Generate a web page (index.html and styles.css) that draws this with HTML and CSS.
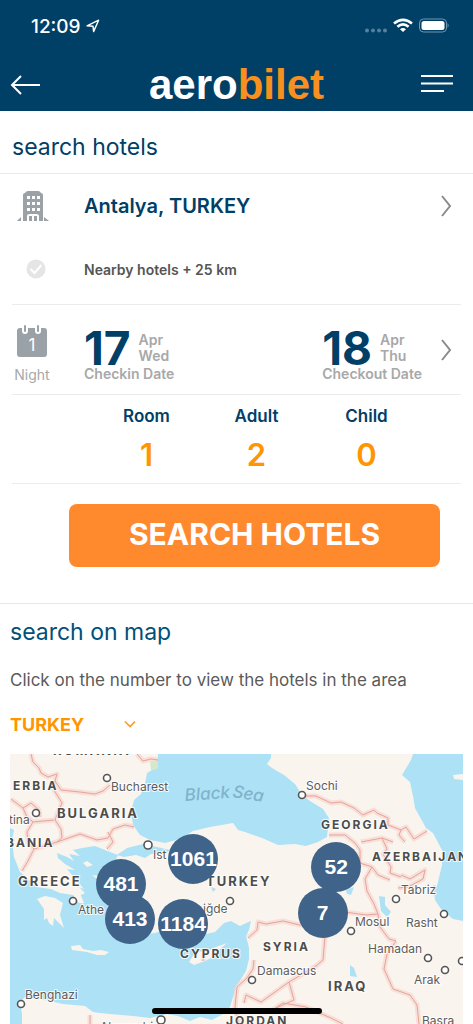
FILE: index.html
```html
<!DOCTYPE html>
<html lang="en">
<head>
    <meta charset="UTF-8">
    <meta name="viewport" content="width=device-width, initial-scale=1.0">
    <title>aerobilet</title>
    <link rel="stylesheet" href="styles.css">
</head>
<body>
    <header class="header">
        <div class="status-bar">
            <span class="clock">12:09</span>
            <svg class="location" width="14" height="14" viewBox="0 0 14 14"><path d="M1 6.8 L12.6 1.2 L7.6 12.6 L7 7.2 Z"/></svg>
            <svg class="signal" width="86" height="18" viewBox="0 0 86 18">
                <g class="dots"><circle cx="4" cy="13.5" r="2"/><circle cx="10" cy="13.5" r="2"/><circle cx="16" cy="13.5" r="2"/><circle cx="22" cy="13.5" r="2"/></g>
                <g class="wifi"><path d="M31 6.6 Q40 -1 49 6.6"/><path d="M34.4 9.8 Q40 5 45.6 9.8"/></g>
                <path class="solid" d="M37 12.2 Q40 10 43 12.2 L40 15 Z"/>
                <rect class="battery" x="56.5" y="2" width="27" height="13" rx="4"/>
                <rect class="solid" x="58.5" y="4" width="23" height="9" rx="2.5"/>
                <path class="cap" d="M84.5 6 Q87 8.5 84.5 11 Z"/>
            </svg>
        </div>
        <div class="nav-bar">
            <button class="icon-button" aria-label="Back">
                <svg width="32" height="22" viewBox="0 0 32 22"><path d="M31 11 H3 M12 2 L3 11 L12 20"/></svg>
            </button>
            <a class="logo" href="#">aero<span>bilet</span></a>
            <button class="icon-button" aria-label="Menu">
                <svg width="32" height="22" viewBox="0 0 32 22"><path d="M0 2 H32 M0 9.5 H32 M0 17 H23"/></svg>
            </button>
        </div>
    </header>

    <main>
        <form class="search">
            <h1 class="title">search hotels</h1>
            <button type="button" class="row destination">
                <svg class="hotel" width="32" height="32" viewBox="0 0 32 32">
                    <path fill-rule="evenodd" d="M6 29 V5 Q6 3 8 3 Q9 1 11 1 H21 Q23 1 24 3 Q26 3 26 5 V31 H22 V26 Q22 24 19 24 H13 Q10 24 10 26 V31 H0 L4 27 V31 H6 Z M10 6 H13 V9 H10 Z M15 6 H18 V9 H15 Z M20 6 H23 V9 H20 Z M10 12 H13 V15 H10 Z M15 12 H18 V15 H15 Z M20 12 H23 V15 H20 Z M10 18 H13 V21 H10 Z M15 18 H18 V21 H15 Z M20 18 H23 V21 H20 Z M12 26 H15 V31 H12 Z M17 26 H20 V31 H17 Z M27 31 V27 L32 31 Z"/>
                </svg>
                <span class="place">Antalya, TURKEY</span>
                <svg class="chevron" width="12" height="24" viewBox="0 0 12 24"><path d="M2 2 L10 12 L2 22"/></svg>
            </button>
            <label class="row nearby">
                <input type="checkbox" class="nearby-check">
                <svg class="tick" width="20" height="20" viewBox="0 0 20 20"><circle cx="10" cy="10" r="9.5"/><path d="M4.5 10 L8.5 14 L15.5 6"/></svg>
                <span>Nearby hotels + 25 km</span>
            </label>

            <button type="button" class="row dates">
                <span class="night">
                    <svg width="32" height="34" viewBox="0 0 32 34">
                        <rect class="sheet" x="1" y="3" width="30" height="29" rx="3"/>
                        <path class="ring-gap" d="M9 1 V6 M22 1 V6"/>
                        <path class="ring" d="M9 1 V6 M22 1 V6"/>
                        <text x="16" y="26">1</text>
                    </svg>
                    <span>Night</span>
                </span>
                <span class="date">
                    <strong>17</strong>
                    <span class="month">Apr<br>Wed</span>
                    <span class="caption">Checkin Date</span>
                </span>
                <span class="date">
                    <strong>18</strong>
                    <span class="month">Apr<br>Thu</span>
                    <span class="caption">Checkout Date</span>
                </span>
                <svg class="chevron" width="12" height="24" viewBox="0 0 12 24"><path d="M2 2 L10 12 L2 22"/></svg>
            </button>

            <div class="guests">
                <button type="button" class="guest">Room <span>1</span></button>
                <button type="button" class="guest">Adult <span>2</span></button>
                <button type="button" class="guest">Child <span>0</span></button>
            </div>
            <button type="submit" class="submit">SEARCH HOTELS</button>
        </form>

        <section class="map-search">
            <h2 class="title">search on map</h2>
            <p class="hint">Click on the number to view the hotels in the area</p>
            <div class="country">
                <select aria-label="Country"><option>TURKEY</option></select>
                <svg width="12" height="8" viewBox="0 0 12 8"><path d="M1 1.5 L6 6.5 L11 1.5"/></svg>
            </div>
            <div class="map">
                <svg class="map-art" viewBox="10 754 453 270">
                    <defs>
                        <path id="borders" d="M31 754 L33 762 L39 768 L41 773 L48 777 L57 774 L55 781 L61 790 L80 792 L95 794 L103 791 L110 785 M55 781 L54 790 L62 803 L58 812 L55 820 L61 829 L62 838 L57 842 L44 846 L34 849 L28 861 L22 871 M11 799 L23 808 L27 817 L33 822 L54 820 M23 808 L31 803 L39 810 L40 817 M33 822 L27 832 L28 842 L34 849 M57 842 L80 834 L97 840 L108 838 L113 829 L125 825 L134 827 M108 832 L113 842 L107 849 M137 754 L143 761 L151 759 L158 760
                        M304 796 L316 796 L331 803 L341 802 L354 808 L363 815 L374 810 L377 813 L388 818 L388 825 L401 830 L399 835 L405 842 M401 830 L406 827 L414 839 L427 831 M329 835 L345 835 L355 843 L360 850 L360 863 L372 867 L378 875 L390 880 M361 842 L382 838 L393 842 M382 838 L387 849 L383 854 L391 867 L390 873 L401 877 M372 867 L365 879 L367 891 L374 904 L378 914 L380 927 L389 939 L396 941 M401 875 L410 879 L425 870 L423 879 L408 887 L398 888
                        M248 938 L257 930 L258 922 L266 924 L283 921 L300 925 L322 922 L345 912 L366 915 L378 914 M325 936 L323 960 L316 966 L289 982 L261 1002 L246 995 L244 1003 M254 960 L253 969 L247 978 L237 987 M289 982 L294 1000 L274 1009 L283 1003 L306 1007 L331 1018 L343 1024 M396 941 L387 954 L384 969 L393 989 L410 995 L417 1005 L419 1024 M237 987 L235 1007 L239 1024 M90 1015 L90 1024 M204 954 L203 961"/>
                    </defs>
                    <rect class="land" x="10" y="754" width="453" height="270"/>
                    <path class="water" d="M158 754 L158 768 L152 770 L147 773 L145 784 L141 794 L134 800 L131 812 L133 825 L140 835 L150 840 L165 843 L180 839 L193 831 L210 827 L233 823 L238 830 L245 832 L262 838 L278 845 L295 844 L306 846 L318 842 L327 837 L329 818 L323 809 L310 801 L302 795 L295 784 L284 775 L272 768 L267 764 L271 758 L271 754 L218 754 L217 757 L209 755 L203 757 L204 760 L211 763 L214 776 L222 777 L228 770 L235 766 L247 770 L251 765 L246 760 L237 758 L226 762 L217 757 L218 754 Z"/>
                    <path class="water" d="M117 855 L127 848 L143 844 L157 847 L170 850 L165 854 L151 854 L145 858 L136 855 L124 857 Z"/>
                    <path class="water" d="M413 754 L411 760 L402 775 L410 782 L413 796 L415 808 L426 828 L433 833 L443 852 L442 865 L437 886 L433 885 L435 900 L441 909 L453 919 L463 921 L463 780 L454 779 L453 775 L463 774 L463 754 Z"/>
                    <path class="water" d="M10 828 L14 830 L12 840 L14 857 L20 872 L28 879 L36 887 L51 889 L60 893 L73 895 L79 903 L84 903 L80 893 L73 885 L84 889 L76 880 L67 869 L75 870 L65 864 L58 858 L57 853 L67 857 L74 861 L69 854 L80 856 L73 850 L82 848 L95 846 L110 852 L118 855 L114 863 L120 873 L112 880 L112 900 L120 925 L140 935 L155 933 L165 930 L180 939 L206 934 L215 932 L224 923 L231 921 L240 926 L244 924 L251 921 L249 930 L246 936 L249 948 L249 959 L246 971 L236 987 L230 1007 L223 1014 L212 1020 L200 1017 L190 1021 L178 1016 L167 1014 L150 1018 L133 1016 L110 1014 L100 1013 L93 1012 L85 1006 L63 1004 L40 999 L25 997 L20 1002 L22 1014 L22 1024 L10 1024 Z"/>
                    <path class="land" d="M37 899 L45 896 L55 898 L63 903 L61 911 L60 915 L64 928 L59 923 L54 918 L53 926 L49 923 L47 918 L44 920 L44 909 Z M71 946 L80 945 L83 949 L93 951 L101 950 L109 952 L105 955 L97 955 L87 952 L72 950 Z M189 962 L196 951 L205 952 L216 947 L227 943 L219 950 L217 955 L205 961 L194 965 Z M83 863 L87 861 L93 865 L87 867 Z M103 883 L111 882 L109 888 L102 886 Z M92 875 L99 876 L97 879 Z M70 880 L79 887 L85 893 L81 895 L72 887 Z M128 927 L133 930 L126 935 Z"/>
                    <path class="water" d="M379 896 L385 897 L385 905 L391 912 L387 917 L381 911 Z M346 890 L354 887 L351 895 L347 894 Z M350 965 L354 968 L357 977 L350 976 Z M211 887 L216 889 L213 892 Z"/>
                    <path class="green" d="M150 762 L158 759 L158 769 L151 770 Z"/>
                    <use href="#borders" class="border-glow"/>
                    <use href="#borders" class="border-line"/>

                    <g class="sea-name"><text transform="translate(185 801) rotate(-4)">Black</text><text transform="translate(232 797) rotate(9)">Sea</text></g>
                    <g class="countries">
                        <text class="large" x="53" y="755">ROMANIA</text>
                        <text x="13" y="790">ERBIA</text>
                        <text class="large" x="57" y="818">BULGARIA</text>
                        <text x="6" y="847">BANIA</text>
                        <text class="large" x="18" y="886">GREECE</text>
                        <text class="large" x="206" y="886">TURKEY</text>
                        <text x="321" y="829">GEORGIA</text>
                        <text x="372" y="861">AZERBAIJAN</text>
                        <text x="180" y="958">CYPRUS</text>
                        <text x="263" y="951">SYRIA</text>
                        <text class="large" x="328" y="991">IRAQ</text>
                        <text x="226" y="1025">JORDAN</text>
                    </g>
                    <g class="cities">
                        <text x="111" y="791">Bucharest</text>
                        <text x="9" y="824">tina</text>
                        <text x="153" y="859">Ist</text>
                        <text x="306" y="790">Sochi</text>
                        <text x="78" y="914">Athe</text>
                        <text x="203" y="913">iğde</text>
                        <text x="25" y="999">Benghazi</text>
                        <text x="257" y="975">Damascus</text>
                        <text x="355" y="926">Mosul</text>
                        <text x="401" y="894">Tabriz</text>
                        <text x="406" y="927">Rasht</text>
                        <text x="368" y="953">Hamadan</text>
                        <text x="414" y="984">Arak</text>
                        <text x="422" y="1025">Basra</text>
                        <text x="100" y="1031">Alexandria</text>
                    </g>
                    <g class="stops">
                        <circle cx="107" cy="778" r="3.5"/><circle cx="36" cy="813" r="3.5"/><circle cx="148" cy="845" r="4"/>
                        <circle cx="302" cy="795" r="3.5"/><circle cx="73" cy="901" r="3.5"/><circle cx="230" cy="901" r="3.5"/>
                        <circle cx="21" cy="1004" r="3.5"/><circle cx="161" cy="1020" r="4"/><circle cx="252" cy="980" r="3.5"/>
                        <circle cx="351" cy="931" r="3.5"/><circle cx="396" cy="899" r="3.5"/><circle cx="444" cy="914" r="3.5"/>
                        <circle cx="428" cy="958" r="3.5"/><circle cx="445" cy="970" r="3.5"/><circle cx="462" cy="961" r="3.5"/>
                    </g>
                </svg>
                <button class="pin pin-istanbul">1061</button>
                <button class="pin pin-izmir">481</button>
                <button class="pin pin-mugla">413</button>
                <button class="pin pin-antalya">1184</button>
                <button class="pin pin-east">52</button>
                <button class="pin pin-southeast">7</button>
            </div>
        </section>
    </main>
    <div class="home-bar"></div>
</body>
</html>
```
FILE: styles.css
```css
* {
    box-sizing: border-box;
    margin: 0;
    padding: 0;
}

body {
    font-family: Inter, "Liberation Sans", sans-serif;
    background-color: #fff;
    color: #004066;
}

button {
    font-family: inherit;
    color: inherit;
    background: none;
    border: none;
    cursor: pointer;
}

svg {
    display: block;
    fill: none;
}

/* Header */
.header {
    background-color: #004066;
    color: #fff;
    height: 111px;
}

.status-bar {
    display: flex;
    align-items: center;
    height: 52px;
    padding: 0 24px 0 31px;
}

.clock {
    font-size: 19px;
    font-weight: 500;
}

.location {
    margin-left: 5px;
    stroke: #fff;
    stroke-width: 1.4;
    stroke-linejoin: round;
}

.signal {
    margin-left: auto;
}

.dots,
.cap {
    fill: #56809b;
}

.wifi {
    stroke: #fff;
    stroke-width: 2.6;
}

.solid {
    fill: #fff;
}

.battery {
    stroke: #7596ac;
}

.nav-bar {
    display: grid;
    grid-template-columns: 32px 1fr 32px;
    align-items: center;
    height: 59px;
    padding: 6px 20px 0 9px;
}

.icon-button svg {
    stroke: #fff;
    stroke-width: 2;
}

.logo {
    padding-left: 11px;
    font-family: "Liberation Sans", Arial, sans-serif;
    font-size: 42px;
    font-weight: bold;
    line-height: 48px;
    text-align: center;
    color: #fff;
    text-decoration: none;
}

.logo span {
    color: #f7901e;
}

/* Search form */
.title {
    font-size: 23px;
    font-weight: 400;
    line-height: 30px;
}

.search {
    padding: 0 12px 36px;
    border-bottom: 1px solid #e8e8e8;
}

.search .title {
    margin: 0 -12px;
    padding: 21px 12px 11px;
    border-bottom: 1px solid #ececec;
}

.row {
    display: grid;
    grid-template-columns: 72px 1fr auto;
    align-items: center;
    width: 100%;
    text-align: left;
}

.chevron {
    stroke: #8a8a8a;
    stroke-width: 2;
    margin-right: 9px;
}

.destination {
    height: 64px;
}

.hotel {
    fill: #9aa1a7;
    margin-left: 5px;
}

.place {
    font-size: 20px;
    font-weight: 600;
}

.nearby {
    position: relative;
    height: 67px;
    padding-bottom: 4px;
    border-bottom: 1px solid #ececec;
    font-size: 14px;
    font-weight: 600;
    color: #555;
}

.nearby-check {
    position: absolute;
    left: 14px;
    width: 20px;
    height: 20px;
    opacity: 0;
}

.tick {
    margin-left: 14px;
}

.tick circle {
    fill: #e5e5e5;
}

.tick path {
    stroke: #fff;
    stroke-width: 2;
}

.dates {
    grid-template-columns: 72px 1fr auto auto;
    height: 90px;
    border-bottom: 1px solid #ececec;
    color: #a8a8a8;
}

.night {
    display: flex;
    flex-direction: column;
    align-items: center;
    gap: 6px;
    width: 40px;
    padding-top: 10px;
    font-size: 14px;
    line-height: 20px;
}

.sheet {
    fill: #9aa1a7;
}

.ring-gap {
    stroke: #fff;
    stroke-width: 6;
    stroke-linecap: round;
}

.ring {
    stroke: #9aa1a7;
    stroke-width: 2;
    stroke-linecap: round;
}

.night text {
    fill: #fff;
    font-size: 17px;
    text-anchor: middle;
}

.date {
    display: grid;
    grid-template-columns: auto 1fr;
    column-gap: 8px;
    align-items: center;
    padding-top: 12px;
    font-size: 14px;
    font-weight: 600;
    line-height: 16px;
}

.date strong {
    font-size: 46px;
    font-weight: 700;
    line-height: 36px;
    color: #004066;
}

.caption {
    grid-column: 1 / 3;
}

.dates .chevron {
    margin-left: 18px;
}

.guests {
    display: grid;
    grid-template-columns: repeat(3, 110px);
    justify-content: center;
    height: 89px;
    padding-left: 40px;
    border-bottom: 1px solid #ececec;
}

.guest {
    display: flex;
    flex-direction: column;
    align-items: center;
    gap: 10px;
    padding-top: 11px;
    font-size: 17px;
    font-weight: 600;
    line-height: 20px;
}

.guest span {
    font-size: 31px;
    line-height: 38px;
    color: #ff9500;
}

.submit {
    display: block;
    width: calc(100% - 78px);
    height: 63px;
    margin: 20px 0 0 57px;
    padding-bottom: 3px;
    border-radius: 8px;
    background-color: #ff8a2d;
    color: #fff;
    font-size: 30px;
    font-weight: 700;
}

/* Map */
.map-search {
    padding: 12px 10px 0;
}

.map-search .title {
    color: #00507a;
    line-height: 32px;
}

.hint {
    margin-top: 20px;
    font-size: 17px;
    line-height: 24px;
    color: #5a5a5a;
}

.country {
    display: grid;
    grid-template-columns: 126px;
    align-items: center;
    margin: 20px 0 18px;
}

.country select,
.country svg {
    grid-area: 1 / 1;
}

.country select {
    height: 24px;
    appearance: none;
    border: none;
    background: none;
    font-family: inherit;
    font-size: 18px;
    font-weight: 700;
    color: #ff9500;
}

.country svg {
    justify-self: end;
    pointer-events: none;
    stroke: #ff9a1e;
    stroke-width: 1.6;
}

.map {
    position: relative;
}

.map-art {
    width: 100%;
}

.land {
    fill: #f9f5ee;
}

.water {
    fill: #ade1f5;
}

.green {
    fill: #d5e8c8;
}

.border-glow {
    stroke: #f8d5ce;
    stroke-width: 5;
    stroke-linejoin: round;
    opacity: 0.7;
}

.border-line {
    stroke: #e5a49c;
    stroke-width: 1;
}

.map-art text {
    paint-order: stroke;
    stroke: #fffc;
    stroke-width: 2;
}

.countries {
    fill: #4c4c4c;
    font-size: 12px;
    font-weight: 700;
    letter-spacing: 2px;
}

.countries .large {
    font-size: 13px;
}

.cities {
    fill: #5c5c5c;
    font-size: 12px;
}

.map-art .sea-name text {
    fill: #80b3cb;
    stroke: none;
    font-size: 17px;
    font-style: italic;
    font-weight: 500;
}

.stops {
    fill: #fff;
    stroke: #555;
    stroke-width: 1.6;
}

.pin {
    position: absolute;
    width: 50px;
    height: 50px;
    margin: -25px 0 0 -25px;
    border-radius: 50%;
    background-color: #3f6389;
    color: #fff;
    font-family: "Liberation Sans", Arial, sans-serif;
    font-size: 21px;
    font-weight: bold;
    text-align: center;
}

.pin-istanbul {
    left: 40.5%;
    top: 39%;
}

.pin-izmir {
    left: 24.5%;
    top: 48%;
}

.pin-mugla {
    left: 26.5%;
    top: 61%;
}

.pin-antalya {
    left: 38.2%;
    top: 63%;
}

.pin-east {
    left: 72%;
    top: 42%;
}

.pin-southeast {
    left: 69%;
    top: 59%;
}

.home-bar {
    position: fixed;
    bottom: 10px;
    left: 50%;
    width: 170px;
    height: 6px;
    margin-left: -85px;
    border-radius: 3px;
    background-color: #000;
}
```
